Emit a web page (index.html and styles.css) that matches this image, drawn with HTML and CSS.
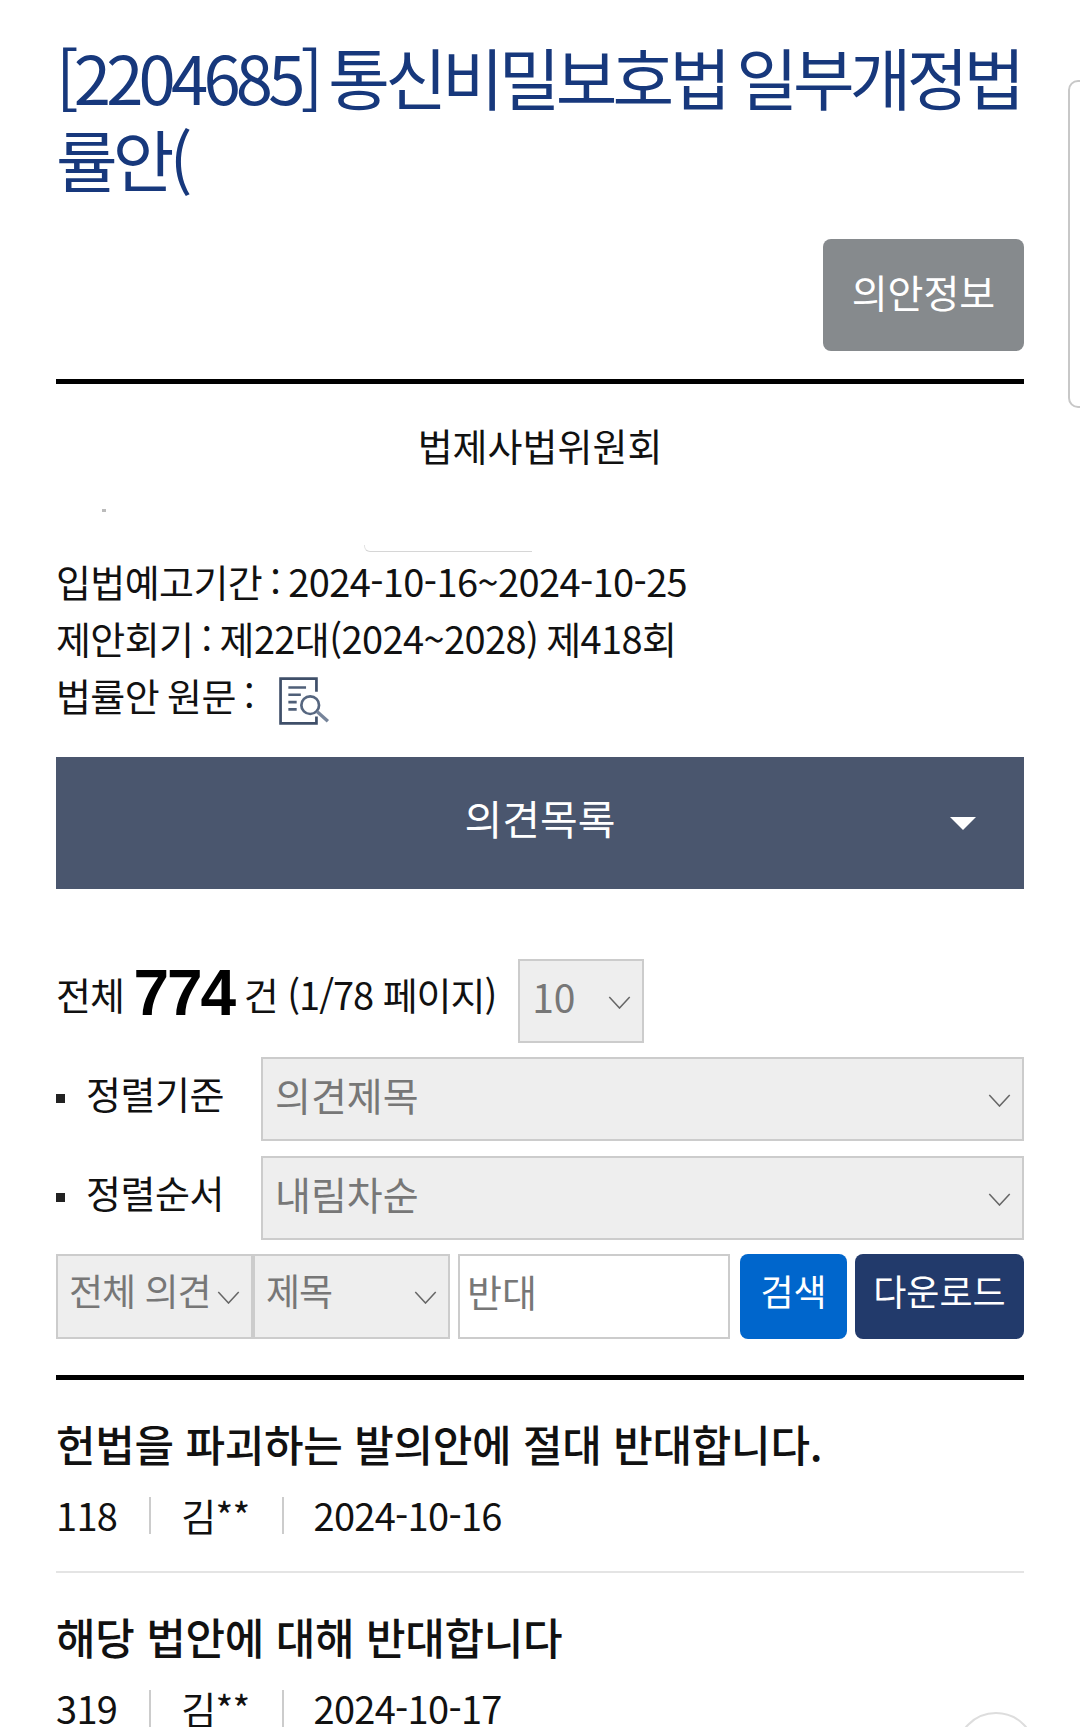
FILE: index.html
```html
<!DOCTYPE html>
<html lang="ko">
<head>
    <meta charset="UTF-8">
    <meta name="viewport" content="width=device-width, initial-scale=1.0">
    <title>통신비밀보호법 일부개정법률안</title>
    <link rel="stylesheet" href="styles.css">
</head>
<body>
    <div class="container">
        <h1 class="bill-title">[2204685] 통신비밀보호법 일부개정법률안(</h1>

        <div class="title-actions">
            <button class="btn-info">의안정보</button>
        </div>

        <!-- Bill summary -->
        <div class="bill-info">
            <p class="committee">법제사법위원회</p>
            <div class="redacted"><span class="redacted-dot"></span><span class="redacted-edge"></span></div>
            <p class="info-line">입법예고기간 : 2024-10-16~2024-10-25</p>
            <p class="info-line">제안회기 : 제22대(2024~2028) 제418회</p>
            <p class="info-line">법률안 원문 :
                <svg class="doc-icon" viewBox="0 0 50 46" width="52" height="48" fill="none">
                    <path d="M36 14V1.5H1.5V44.5H36V38" stroke="#3f4f69" stroke-width="2.6"/>
                    <path d="M9 10H26M9 17H21M9 24H17M9 31H17" stroke="#4f5f78" stroke-width="2.6"/>
                    <circle cx="30" cy="27" r="8.5" stroke="#56667f" stroke-width="2.6"/>
                    <path d="M36.5 33L47 42.5" stroke="#76849a" stroke-width="3.2"/>
                </svg>
            </p>
        </div>

        <div class="list-banner">
            <span>의견목록</span>
            <i class="banner-caret"></i>
        </div>

        <!-- Filters -->
        <div class="total-row">
            <span class="total-text">전체 <strong>774</strong> 건 (1/78 페이지)</span>
            <div class="select select-page">
                <span>10</span>
                <svg class="chevron" viewBox="0 0 24 14"><path d="M1 1L12 13L23 1"/></svg>
            </div>
        </div>

        <div class="sort-row">
            <label class="sort-label">정렬기준</label>
            <div class="select select-wide">
                <span>의견제목</span>
                <svg class="chevron" viewBox="0 0 24 14"><path d="M1 1L12 13L23 1"/></svg>
            </div>
        </div>
        <div class="sort-row">
            <label class="sort-label">정렬순서</label>
            <div class="select select-wide">
                <span>내림차순</span>
                <svg class="chevron" viewBox="0 0 24 14"><path d="M1 1L12 13L23 1"/></svg>
            </div>
        </div>

        <div class="search-row">
            <div class="select select-small">
                <span>전체 의견</span>
                <svg class="chevron" viewBox="0 0 24 14"><path d="M1 1L12 13L23 1"/></svg>
            </div>
            <div class="select select-small">
                <span>제목</span>
                <svg class="chevron" viewBox="0 0 24 14"><path d="M1 1L12 13L23 1"/></svg>
            </div>
            <input class="search-input" type="text" value="반대">
            <button class="btn-search">검색</button>
            <button class="btn-download">다운로드</button>
        </div>

        <!-- Opinion list -->
        <ul class="opinions">
            <li class="opinion">
                <div class="opinion-title">헌법을 파괴하는 발의안에 절대 반대합니다.</div>
                <div class="opinion-meta"><span>118</span><span>김**</span><span>2024-10-16</span></div>
            </li>
            <li class="opinion">
                <div class="opinion-title">해당 법안에 대해 반대합니다</div>
                <div class="opinion-meta"><span>319</span><span>김**</span><span>2024-10-17</span></div>
            </li>
        </ul>
    </div>

    <div class="side-tab"></div>
    <div class="float-top"></div>
</body>
</html>
```

FILE: styles.css
```css
* {
    box-sizing: border-box;
}
html, body {
    margin: 0;
    height: 1727px;
    overflow: hidden;
}
body {
    font-family: "Noto Sans CJK KR", "Noto Sans", sans-serif;
    font-size: 38px;
    color: #111;
    background-color: #fff;
    position: relative;
}
p {
    margin: 0;
}
.container {
    padding: 35px 56px 0;
}
.bill-title {
    margin: 0 -6px 0 0;
    font-size: 67px;
    font-weight: 400;
    line-height: 82px;
    letter-spacing: -4.8px;
    word-spacing: -4px;
    color: #17387c;
    height: 164px;
}
.title-actions {
    display: flex;
    justify-content: flex-end;
    margin-top: 40px;
}
button {
    font-family: inherit;
    color: #fff;
    border: none;
    padding: 0;
}
.btn-info {
    width: 201px;
    height: 112px;
    font-size: 39px;
    padding-bottom: 8px;
    background-color: #868a8d;
    border-radius: 8px;
}
.bill-info {
    margin-top: 28px;
    border-top: 5px solid #000;
    padding-top: 33px;
}
.committee {
    text-align: center;
    line-height: 56px;
}
.redacted {
    height: 79px;
    position: relative;
}
.redacted-dot {
    position: absolute;
    left: 46px;
    top: 36px;
    width: 4px;
    height: 3px;
    background-color: #bbb;
}
.redacted-edge {
    position: absolute;
    left: 308px;
    top: 72px;
    width: 168px;
    height: 7px;
    border-bottom: 1px solid #d6d6d6;
    border-left: 1px solid #e2e2e2;
    border-bottom-left-radius: 6px;
}
.info-line {
    height: 57px;
    line-height: 57px;
    letter-spacing: -0.6px;
    word-spacing: -2px;
    display: flex;
    align-items: center;
    gap: 25px;
}
.doc-icon {
    display: block;
    margin-top: 12px;
}
.list-banner {
    margin-top: 34px;
    height: 132px;
    padding-bottom: 12px;
    background-color: #4a566e;
    color: #fff;
    font-size: 41px;
    display: flex;
    align-items: center;
    justify-content: center;
    position: relative;
}
.banner-caret {
    position: absolute;
    right: 48px;
    top: 60px;
    border-left: 13px solid transparent;
    border-right: 13px solid transparent;
    border-top: 13px solid #fff;
}
.total-row {
    margin-top: 70px;
    display: flex;
    align-items: center;
    gap: 22px;
}
.total-text {
    font-size: 38px;
    letter-spacing: -1.05px;
    position: relative;
    top: -8px;
    white-space: nowrap;
}
.total-text strong {
    font-family: "Liberation Sans", Arial, sans-serif;
    font-size: 64px;
    font-weight: 700;
    letter-spacing: -2px;
    color: #000;
    vertical-align: -5px;
    line-height: 1;
}
.select {
    display: flex;
    align-items: center;
    justify-content: space-between;
    background-color: #eee;
    border: 2px solid #ccc;
    color: #777;
    padding: 0 11px 10px 12px;
    white-space: nowrap;
}
.chevron {
    width: 23px;
    height: 13px;
    flex: none;
    margin-top: 12px;
    fill: none;
    stroke: #666;
    stroke-width: 1.6;
}
.select-page {
    width: 126px;
    height: 84px;
    font-size: 39px;
}
.sort-row {
    display: flex;
    align-items: center;
    margin-top: 14px;
}
.sort-row + .sort-row {
    margin-top: 15px;
}
.sort-label {
    width: 205px;
    padding-left: 30px;
    padding-bottom: 14px;
    position: relative;
    letter-spacing: -0.5px;
}
.sort-label::before {
    content: "";
    position: absolute;
    left: 0;
    top: 29px;
    width: 9px;
    height: 9px;
    background-color: #222;
}
.select-wide {
    flex: 1;
    height: 84px;
    font-size: 39px;
}
.search-row {
    display: flex;
    height: 85px;
    margin-top: 14px;
    font-size: 37px;
}
.select-small {
    width: 197px;
    padding: 0 11px 13px 11px;
    letter-spacing: -1px;
}
.select-small .chevron {
    margin-top: 15px;
}
.search-input {
    width: 272px;
    margin-left: 8px;
    padding: 0 7px 13px;
    font: inherit;
    font-size: 38px;
    color: #777;
    background: #fff;
    border: 2px solid #ccc;
    border-radius: 0;
}
.btn-search,
.btn-download {
    font-size: 36px;
    border-radius: 8px;
    padding-bottom: 13px;
}
.btn-search {
    width: 107px;
    margin-left: 10px;
    background-color: #0066cc;
}
.btn-download {
    flex: 1;
    margin-left: 8px;
    background-color: #223a6b;
}
.opinions {
    list-style: none;
    margin: 36px 0 0;
    padding: 0;
    border-top: 5px solid #000;
}
.opinion {
    padding: 33px 0 34px;
    border-bottom: 2px solid #e4e4e4;
}
.opinion-title {
    font-size: 43px;
    font-weight: 500;
    line-height: 60px;
    letter-spacing: -0.3px;
    color: #111;
}
.opinion-meta {
    display: flex;
    margin-top: 20px;
    line-height: 44px;
    letter-spacing: -0.7px;
}
.opinion-meta span + span {
    margin-left: 32px;
    padding-left: 32px;
    background: linear-gradient(#ccc, #ccc) left center / 2px 37px no-repeat;
}
/* things floating over the page */
.side-tab {
    position: absolute;
    top: 80px;
    right: -10px;
    width: 22px;
    height: 328px;
    border: 2px solid #c8c8c8;
    border-radius: 10px;
}
.float-top {
    position: absolute;
    left: 956px;
    top: 1712px;
    width: 80px;
    height: 80px;
    border: 2px solid #ddd;
    border-radius: 50%;
    background-color: #fff;
}
```
